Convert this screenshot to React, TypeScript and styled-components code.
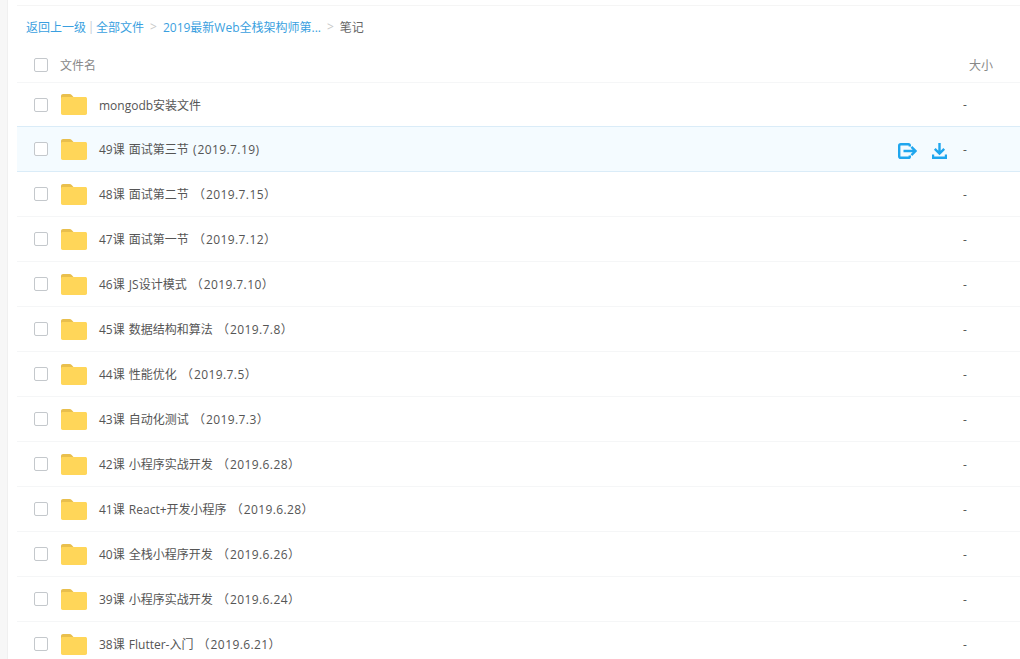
import React from 'react'
import styled, { createGlobalStyle } from 'styled-components'

const GlobalStyle = createGlobalStyle`
    html, body {
        margin: 0;
        padding: 0;
        height: 100%;
        overflow: hidden;
        background: #fff;
    }
    body {
        font-family: "Open Sans", "Noto Sans CJK SC", sans-serif;
        font-size: 12px;
        color: #666;
    }
`

const Page = styled.div`
    display: flex;
    height: 659px;
    overflow: hidden;
`

const SideStrip = styled.div`
    width: 7px;
    flex: none;
    background: #f7f7f7;
    border-right: 1px solid #f0f0f0;
`

const Main = styled.div`
    flex: 1;
    min-width: 0;
    padding-left: 9px;
`

const TopRule = styled.div`
    height: 5px;
    border-bottom: 1px solid #f5f5f5;
`

const Crumbs = styled.div`
    display: flex;
    align-items: center;
    height: 41px;
    padding-left: 9px;
    color: #666;
    white-space: nowrap;
`

const CrumbLink = styled.span`
    color: #3a9fe0;
`

const CrumbBar = styled.span`
    width: 10px;
    text-align: center;
    color: #c4ccd4;
`

const CrumbArrow = styled.span`
    color: #c8c8c8;
    margin: 0 6px;
`

const HeaderRow = styled.div`
    display: flex;
    align-items: center;
    height: 35px;
    border-bottom: 1px solid #f5f6f7;
    color: #888;
`

const Row = styled.div<{ $hover?: boolean }>`
    display: flex;
    align-items: center;
    height: 44px;
    border-bottom: 1px solid ${p => (p.$hover ? '#daecf8' : '#f5f6f7')};
    background: ${p => (p.$hover ? '#f4fbff' : '#fff')};
    margin-top: ${p => (p.$hover ? '-1px' : '0')};
    border-top: ${p => (p.$hover ? '1px solid #daecf8' : 'none')};
    color: #555;

    ${HeaderRow} + & {
        height: 43px;
    }
`

const Check = styled.span`
    width: 12px;
    height: 12px;
    flex: none;
    margin-left: 17px;
    border: 1px solid #c4c8cc;
    border-radius: 2px;
    background: #fff;
`

const FolderWrap = styled.svg`
    flex: none;
    margin-left: 13px;
`

const Name = styled.span`
    margin-left: 12px;
    flex: 1;
    white-space: pre;
    word-spacing: 1px;
`

const DateText = styled.span`
    letter-spacing: 0.4px;
    margin-left: 1px;
`

const Actions = styled.div`
    display: flex;
    align-items: center;
    gap: 15px;
    margin-right: 16px;
    padding-top: 4px;
`

const Size = styled.span`
    width: 57px;
    flex: none;
    color: #555;
`

const HeaderName = styled.span`
    margin-left: 12px;
    flex: 1;
`

const HeaderSize = styled.span`
    width: 51px;
    flex: none;
`

const Folder = () => (
    <FolderWrap width="26" height="21" viewBox="0 0 26 21">
        <path d="M0 2C0 .9.9 0 2 0h6.500c1 0 1.700.4 2.400 1.200L12.500 3H2v5H0z" fill="#e9bf4c" />
        <path d="M0 4.500C0 3.600.8 3 1.700 3h22.600c.9 0 1.700.6 1.700 1.500v14.800c0 1-.8 1.700-1.700 1.700H1.700C.8 21 0 20.300 0 19.300z" fill="#ffd659" />
    </FolderWrap>
)

const SaveIcon = () => (
    <svg width="19" height="16" viewBox="0 0 19 16" fill="none" stroke="#1fa6ee" strokeWidth="2.4">
        <path d="M11.800 3.600V2.600c0-.8-.6-1.400-1.400-1.400H2.800c-.9 0-1.600.7-1.600 1.600v10.400c0 .9.700 1.600 1.600 1.600h7.600c.8 0 1.400-.6 1.400-1.400v-1" />
        <path d="M5.500 8H17.400M13.400 3.800 17.600 8l-4.200 4.200" />
    </svg>
)

const DownloadIcon = () => (
    <svg width="15" height="16" viewBox="0 0 15 16" fill="none" stroke="#1fa6ee" strokeWidth="2.4">
        <path d="M7.500 0v10M2.800 5.800 7.500 10.500l4.700-4.700" />
        <path d="M1 11.500v3.200h13v-3.200" strokeWidth="2.400" />
    </svg>
)

const files = [
    'mongodb安装文件',
    '49课 面试第三节 (2019.7.19)',
    '48课 面试第二节 （2019.7.15）',
    '47课 面试第一节 （2019.7.12）',
    '46课 JS设计模式 （2019.7.10）',
    '45课 数据结构和算法 （2019.7.8）',
    '44课 性能优化 （2019.7.5）',
    '43课 自动化测试 （2019.7.3）',
    '42课 小程序实战开发 （2019.6.28）',
    '41课 React+开发小程序 （2019.6.28）',
    '40课 全栈小程序开发 （2019.6.26）',
    '39课 小程序实战开发 （2019.6.24）',
    '38课 Flutter-入门 （2019.6.21）',
]

// dates sit wider than the rest of the line
const renderName = (name: string) =>
    name
        .split(/(\d{4}\.\d+\.\d+)/)
        .map((part, i) =>
            i % 2 ? <DateText key={i}>{part}</DateText> : part,
        )

export default function App() {
    return (
        <Page>
            <GlobalStyle />
            <SideStrip />
            <Main>
                <TopRule />
                <Crumbs>
                    <CrumbLink>返回上一级</CrumbLink>
                    <CrumbBar>|</CrumbBar>
                    <CrumbLink>全部文件</CrumbLink>
                    <CrumbArrow>&gt;</CrumbArrow>
                    <CrumbLink>2019最新Web全栈架构师第...</CrumbLink>
                    <CrumbArrow>&gt;</CrumbArrow>
                    <span>笔记</span>
                </Crumbs>
                <HeaderRow>
                    <Check />
                    <HeaderName>文件名</HeaderName>
                    <HeaderSize>大小</HeaderSize>
                </HeaderRow>
                {files.map((name, i) => (
                    <Row key={name} $hover={i === 1}>
                        <Check />
                        <Folder />
                        <Name>{renderName(name)}</Name>
                        {i === 1 && (
                            <Actions>
                                <SaveIcon />
                                <DownloadIcon />
                            </Actions>
                        )}
                        <Size>-</Size>
                    </Row>
                ))}
            </Main>
        </Page>
    )
}
